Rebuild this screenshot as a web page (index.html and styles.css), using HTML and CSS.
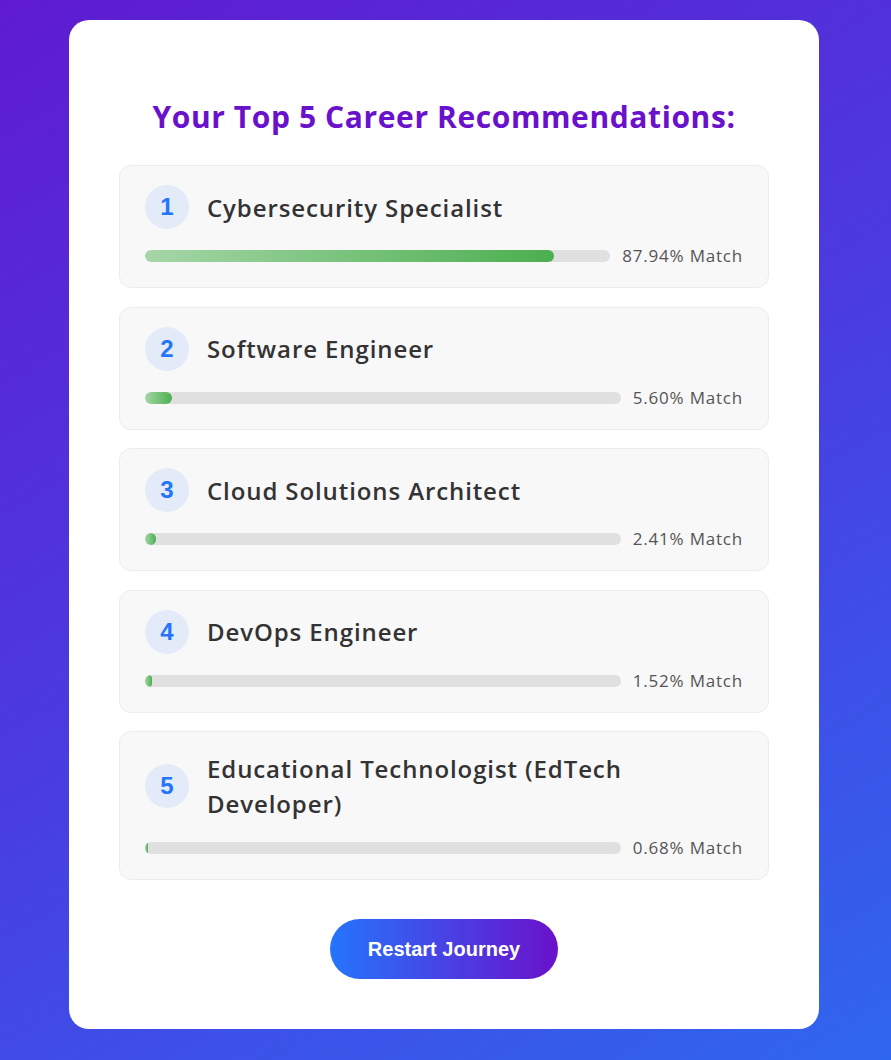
FILE: index.html
```html
<!DOCTYPE html>
<html lang="en">
<head>
<meta charset="utf-8">
<title>Career Recommendations</title>
<link rel="stylesheet" href="styles.css">
</head>
<body>
<div class="card">
  <h2 class="title">Your Top 5 Career Recommendations:</h2>
  <div class="list">
    <div class="item">
      <div class="head"><span class="num">1</span><span class="name">Cybersecurity Specialist</span></div>
      <div class="barrow"><div class="bar"><div class="fill" style="width:87.94%"></div></div><span class="pct">87.94% Match</span></div>
    </div>
    <div class="item">
      <div class="head"><span class="num">2</span><span class="name">Software Engineer</span></div>
      <div class="barrow"><div class="bar"><div class="fill" style="width:5.60%"></div></div><span class="pct">5.60% Match</span></div>
    </div>
    <div class="item">
      <div class="head"><span class="num">3</span><span class="name">Cloud Solutions Architect</span></div>
      <div class="barrow"><div class="bar"><div class="fill" style="width:2.41%"></div></div><span class="pct">2.41% Match</span></div>
    </div>
    <div class="item">
      <div class="head"><span class="num">4</span><span class="name">DevOps Engineer</span></div>
      <div class="barrow"><div class="bar"><div class="fill" style="width:1.52%"></div></div><span class="pct">1.52% Match</span></div>
    </div>
    <div class="item">
      <div class="head"><span class="num">5</span><span class="name">Educational Technologist (EdTech Developer)</span></div>
      <div class="barrow"><div class="bar"><div class="fill" style="width:0.68%"></div></div><span class="pct">0.68% Match</span></div>
    </div>
  </div>
  <div class="actions"><button class="restart">Restart Journey</button></div>
</div>
</body>
</html>
```

FILE: styles.css
```css
* { box-sizing: border-box; }
html, body { margin: 0; }
body {
  min-height: 1060px;
  padding: 20px 0 32px;
  background: linear-gradient(150deg, #5f1bd0 0%, #4a3ce0 50%, #2f66ef 100%);
  font-family: "Open Sans", "Liberation Sans", sans-serif;
}
.card {
  width: 750px;
  margin: 0 auto 0 69px;
  background: #fff;
  border-radius: 20px;
  padding: 50px 50px 50px;
}
.title {
  margin: 26px 0 27px;
  text-align: center;
  color: #6a11cb;
  font-size: 30px;
  line-height: 42px;
  font-weight: 700;
  letter-spacing: 0.6px;
}
.list { display: flex; flex-direction: column; gap: 18.5px; }
.item {
  background: #f8f8f8;
  border: 1px solid #ececec;
  border-radius: 12px;
  padding: 19px 25px 19px;
}
.head { display: flex; align-items: center; gap: 18px; }
.num {
  flex: 0 0 44px;
  width: 44px; height: 44px;
  border-radius: 50%;
  background: #e4ebf8;
  color: #2575fc;
  display: flex; align-items: center; justify-content: center;
  font-family: "Liberation Sans", Arial, sans-serif;
  font-weight: 700;
  font-size: 24px;
}
.name {
  color: #333;
  font-size: 24px;
  line-height: 35px;
  font-weight: 600;
  letter-spacing: 0.9px;
  padding-right: 60px;
}
.barrow { display: flex; align-items: center; gap: 12px; margin-top: 15px; }
.bar {
  flex: 1;
  height: 12px;
  background: #e0e0e0;
  border-radius: 6px;
  overflow: hidden;
}
.fill {
  height: 100%;
  border-radius: 6px;
  background: linear-gradient(90deg, #a5d6a7, #4caf50);
}
.pct {
  color: #555;
  font-size: 17px;
  line-height: 24px;
  font-weight: 400;
  letter-spacing: 0.8px;
}
.actions { display: flex; justify-content: center; margin-top: 39px; }
.restart {
  border: none;
  height: 60px;
  padding: 0 38px;
  border-radius: 30px;
  background: linear-gradient(90deg, #2575fc, #6a11cb);
  color: #fff;
  font-family: "Liberation Sans", Arial, sans-serif;
  font-weight: 700;
  font-size: 20px;
}
```
